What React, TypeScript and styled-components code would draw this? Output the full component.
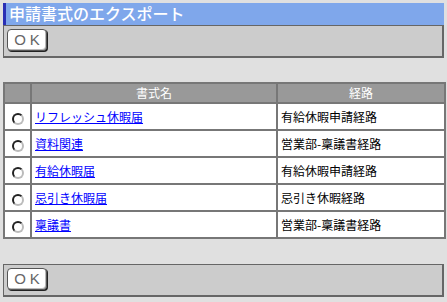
import styled, { createGlobalStyle } from 'styled-components';

interface IRow {
  name: string;
  route: string;
}

const ROWS: IRow[] = [
  { name: 'リフレッシュ休暇届', route: '有給休暇申請経路' },
  { name: '資料関連', route: '営業部-稟議書経路' },
  { name: '有給休暇届', route: '有給休暇申請経路' },
  { name: '忌引き休暇届', route: '忌引き休暇経路' },
  { name: '稟議書', route: '営業部-稟議書経路' },
];

const GlobalStyle = createGlobalStyle`
  html, body {
    margin: 0;
    padding: 0;
    background: #e0e0e0;
  }
  body {
    font-family: "Noto Sans CJK JP", "DejaVu Sans", sans-serif;
  }
`;

const Page = styled.div`
  width: 441px;
  padding: 3px;
  display: flex;
  flex-direction: column;
`;

const TitleBar = styled.div`
  height: 22px;
  background: #7fa7eb;
  border-left: 3px solid #2a2fb5;
  padding-left: 3px;
  color: #ffffff;
  font-size: 16px;
  font-weight: 500;
  line-height: 21px;
  white-space: nowrap;
`;

const Toolbar = styled.div<{ $gapTop?: boolean }>`
  margin-top: ${({ $gapTop }) => ($gapTop ? '25px' : '0')};
  background: #cccccc;
  border: 1px solid #666666;
  border-width: 1px 2px 2px 1px;
  padding: 3px 3px;
  box-sizing: border-box;
  height: 33px;
  display: flex;
  align-items: flex-start;
`;

const OkButton = styled.button`
  width: 40px;
  height: 22px;
  padding: 0;
  background: #ffffff;
  border: 1px solid #555555;
  border-radius: 4px;
  box-shadow: 1px 1px 0 #222222, inset -1px -1px 0 #bbbbbb;
  color: #666666;
  font-family: "Liberation Sans", sans-serif;
  font-size: 15px;
  font-weight: 300;
  letter-spacing: 4px;
  text-indent: 4px;
  line-height: 20px;
`;

const Table = styled.table`
  margin-top: 24px;
  width: 441px;
  border-collapse: collapse;
  table-layout: fixed;
  background: #ffffff;
  border: 2px solid #6e6e6e;
  font-size: 12px;
`;

const HeadCell = styled.th`
  height: 18px;
  padding: 0;
  background: #999999;
  color: #ffffff;
  font-weight: normal;
  text-align: center;
  border: 2px solid #777777;
  line-height: 18px;
`;

const Cell = styled.td<{ $center?: boolean }>`
  height: 25px;
  padding: 0 0 0 3px;
  border: 2px solid #777777;
  text-align: ${({ $center }) => ($center ? 'center' : 'left')};
  color: #000000;
  white-space: nowrap;
`;

const RadioDot = styled.span`
  display: inline-block;
  width: 8px;
  height: 8px;
  border-radius: 50%;
  border: 2px solid;
  border-color: #222222 #bbbbbb #bbbbbb #222222;
  background: #ffffff;
  vertical-align: middle;
  margin-left: -2px;
`;

const NameLink = styled.a`
  color: #0000ff;
  text-decoration: underline;
`;

const App = () => {
  return (
    <>
      <GlobalStyle />
      <Page>
        <TitleBar>申請書式のエクスポート</TitleBar>
        <Toolbar>
          <OkButton>OK</OkButton>
        </Toolbar>
        <Table>
          <colgroup>
            <col style={{ width: 27 }} />
            <col style={{ width: 246 }} />
            <col style={{ width: 168 }} />
          </colgroup>
          <thead>
            <tr>
              <HeadCell />
              <HeadCell>書式名</HeadCell>
              <HeadCell>経路</HeadCell>
            </tr>
          </thead>
          <tbody>
            {ROWS.map((row) => (
              <tr key={row.name}>
                <Cell $center>
                  <RadioDot />
                </Cell>
                <Cell>
                  <NameLink href="#">{row.name}</NameLink>
                </Cell>
                <Cell>{row.route}</Cell>
              </tr>
            ))}
          </tbody>
        </Table>
        <Toolbar $gapTop>
          <OkButton>OK</OkButton>
        </Toolbar>
      </Page>
    </>
  );
};

export default App;
